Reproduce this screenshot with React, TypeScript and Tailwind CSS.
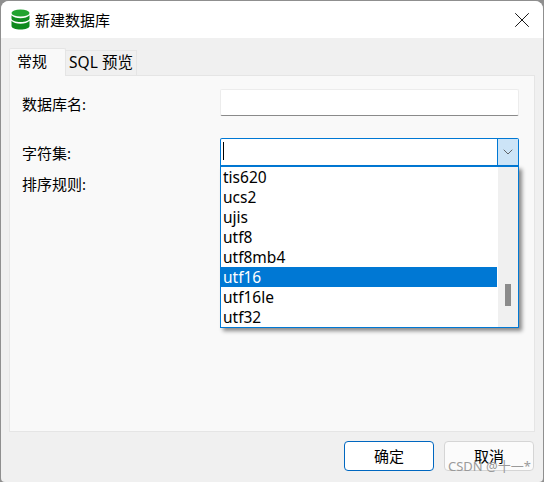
import { X, ChevronDown } from 'lucide-react'

const charsets = ['tis620', 'ucs2', 'ujis', 'utf8', 'utf8mb4', 'utf16', 'utf16le', 'utf32']

function DbIcon() {
  return (
    <svg width="19" height="21" viewBox="0 0 19 21">
      <ellipse cx="9.5" cy="4" rx="9" ry="3.600" fill="#22a32f" />
      <path d="M.5 6.200c1.500 2.100 5.200 3 9 3s7.500-.9 9-3v3.300c0 2-4 3.500-9 3.500s-9-1.500-9-3.500z" fill="#128a20" />
      <path d="M.5 11.700c1.500 2.100 5.200 3 9 3s7.500-.9 9-3v5.300c0 2-4 3.500-9 3.500s-9-1.500-9-3.500z" fill="#0f8a1d" />
    </svg>
  )
}

export default function App() {
  return (
    <div
      className="w-[544px] h-[482px] bg-[#8f8f8f] text-[15.5px] text-black overflow-hidden"
      style={{ fontFamily: '"Noto Sans", "Noto Sans CJK SC", sans-serif' }}
    >
      <div className="relative w-[542px] h-[481px] ml-px mt-px flex flex-col rounded-t-[8px] rounded-b-[4px] overflow-hidden bg-[#f0f0f0]">
        {/* Titelleiste */}
        <div className="h-[37px] bg-white flex items-center pl-[10px] pr-[8px] shrink-0">
          <DbIcon />
          <span className="ml-[5px] text-[15px] leading-5">新建数据库</span>
          <X className="ml-auto w-[26px] h-[26px] text-[#111]" strokeWidth={0.9} />
        </div>

        {/* Tabs */}
        <div className="flex items-end pl-[8px] h-[37px] shrink-0">
          <div className="w-[57px] h-[28px] bg-[#f9f9f9] border border-b-0 border-[#e5e5e5] flex items-center text-[15px] rounded-t-[2px] relative z-10 -mb-px pl-[7px] pb-[2px]">
            常规
          </div>
          <div className="w-[71px] h-[25px] bg-[#f0f0f0] border border-l-0 border-b-0 border-[#e5e5e5] flex items-center justify-center whitespace-nowrap">
            SQL 预览
          </div>
        </div>

        {/* Inhalt */}
        <div className="mx-[8px] h-[357px] bg-[#f9f9f9] border border-[#e5e5e5] shrink-0 pl-[12px] pt-[13px] relative">
          <div className="flex items-center h-[27px]">
            <span className="w-[198px] pt-1 text-[15px]">数据库名:</span>
            <div className="w-[299px] h-[27px] bg-white border border-[#ececec] border-b-[#8a8a8a] rounded-[2px]" />
          </div>
          <div className="flex items-start mt-[22px] h-[29px]">
            <span className="w-[198px] leading-[31px] text-[15px]">字符集:</span>
            <div className="relative w-[299px] h-[29px] bg-white border border-[#0078d4] border-b-2 flex justify-between rounded-t-[2px]">
              <div className="w-px h-[18px] bg-black ml-[2px] mt-[3px]" />
              <div className="w-[21px] h-full bg-[#cce4f7] border-l border-[#0078d4] flex items-center justify-center">
                <ChevronDown className="w-[16px] h-[16px] text-[#444]" strokeWidth={1.2} />
              </div>
              {/* Dropdown */}
              <div className="absolute left-[-1px] top-[27px] w-[299px] h-[162px] bg-white border border-[#0078d4] z-20 flex shadow-[3px_3px_4px_rgba(0,0,0,0.45)]">
                <ul className="w-[276px]">
                  {charsets.map((name) => (
                    <li
                      key={name}
                      className={`h-5 pl-[2px] leading-[21px] ${name === 'utf16' ? 'bg-[#0078d4] text-white' : ''}`}
                    >
                      {name}
                    </li>
                  ))}
                </ul>
                <div className="w-[20px] ml-px bg-[#f0f0f0] relative">
                  <div className="absolute left-[7px] top-[117px] w-[6px] h-[22px] bg-[#8b8b8b]" />
                </div>
              </div>
            </div>
          </div>
          <div className="mt-[3px] leading-[29px] text-[15px]">排序规则:</div>
        </div>

        {/* Footer */}
        <div className="flex justify-end gap-[10px] pr-[9px] pt-[9px]">
          <button className="w-[90px] h-[30px] bg-white border border-[#0067c0] rounded-[4px] text-[15px]">确定</button>
          <button className="w-[90px] h-[30px] bg-[#fbfbfb] border border-[#d5d5d5] rounded-[4px] text-[15px]">取消</button>
        </div>

        {/* Wasserzeichen */}
        <span className="absolute left-[447px] top-[457px] text-[13px] leading-4 text-[#9a9a9a] whitespace-nowrap">
          CSDN @十一*
        </span>
      </div>
    </div>
  )
}
